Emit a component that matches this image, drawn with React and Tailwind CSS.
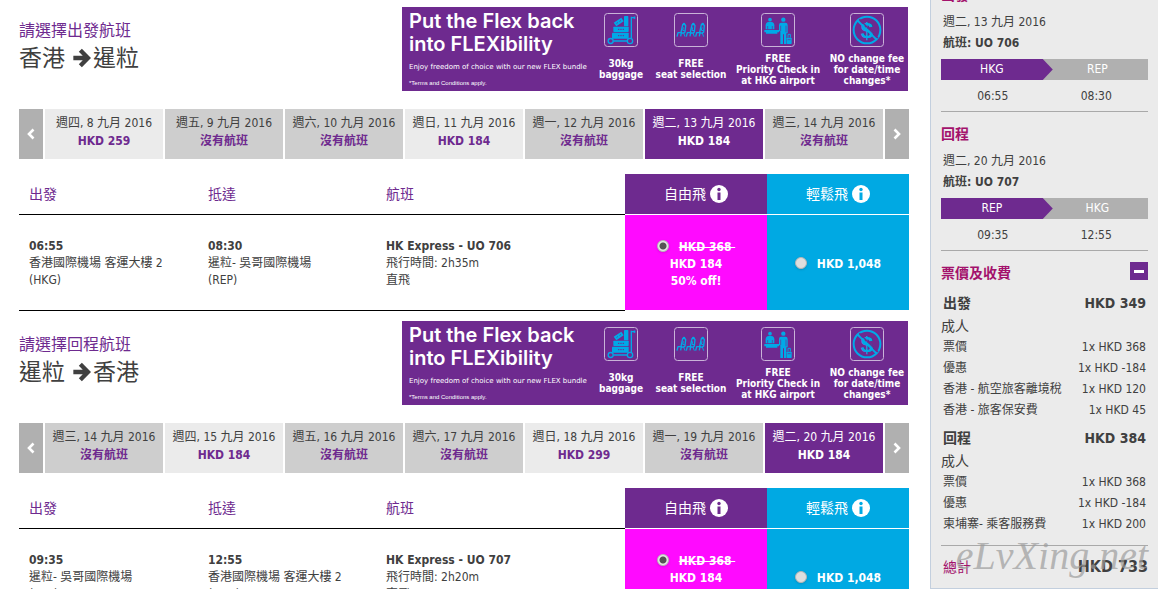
import { useState } from "react";

const NONE = "沒有航班";

const journeys = [
  {
    id: "out",
    title: "請選擇出發航班",
    from: "香港",
    to: "暹粒",
    selected: 5,
    dates: [
      ["週四, 8 九月 2016", "HKD 259"],
      ["週五, 9 九月 2016", NONE],
      ["週六, 10 九月 2016", NONE],
      ["週日, 11 九月 2016", "HKD 184"],
      ["週一, 12 九月 2016", NONE],
      ["週二, 13 九月 2016", "HKD 184"],
      ["週三, 14 九月 2016", NONE],
    ],
    depart: ["06:55", "香港國際機場 客運大樓 2", "(HKG)"],
    arrive: ["08:30", "暹粒- 吳哥國際機場", "(REP)"],
    flight: ["HK Express - UO 706", "飛行時間: 2h35m", "直飛"],
  },
  {
    id: "back",
    title: "請選擇回程航班",
    from: "暹粒",
    to: "香港",
    selected: 6,
    dates: [
      ["週三, 14 九月 2016", NONE],
      ["週四, 15 九月 2016", "HKD 184"],
      ["週五, 16 九月 2016", NONE],
      ["週六, 17 九月 2016", NONE],
      ["週日, 18 九月 2016", "HKD 299"],
      ["週一, 19 九月 2016", NONE],
      ["週二, 20 九月 2016", "HKD 184"],
    ],
    depart: ["09:35", "暹粒- 吳哥國際機場", "(REP)"],
    arrive: ["12:55", "香港國際機場 客運大樓 2", "(HKG)"],
    flight: ["HK Express - UO 707", "飛行時間: 2h20m", "直飛"],
  },
];

const legs = [
  { title: "出發", date: "週二, 13 九月 2016", flight: "UO 706", from: "HKG", to: "REP", dep: "06:55", arr: "08:30" },
  { title: "回程", date: "週二, 20 九月 2016", flight: "UO 707", from: "REP", to: "HKG", dep: "09:35", arr: "12:55" },
];

const fares = [
  {
    title: "出發",
    total: "HKD 349",
    rows: [
      ["票價", "1x HKD 368"],
      ["優惠", "1x HKD -184"],
      ["香港 - 航空旅客離境稅", "1x HKD 120"],
      ["香港 - 旅客保安費", "1x HKD 45"],
    ],
  },
  {
    title: "回程",
    total: "HKD 384",
    rows: [
      ["票價", "1x HKD 368"],
      ["優惠", "1x HKD -184"],
      ["柬埔寨- 乘客服務費", "1x HKD 200"],
    ],
  },
];

function ArrowIcon() {
  return (
    <svg viewBox="0 0 57 60" className="mr-[2px] ml-[7px] h-[20px] w-[19px]" aria-hidden="true">
      <path d="M4 30H44M25 7 48 30 25 53" fill="none" stroke="currentColor" strokeWidth="13" />
    </svg>
  );
}

function Chevron({ d }) {
  return (
    <svg viewBox="0 0 8 12" className="h-[12px] w-[8px]" aria-hidden="true">
      <path d={d} fill="none" stroke="currentColor" strokeWidth="2.600" />
    </svg>
  );
}

function InfoIcon({ mark }) {
  return (
    <svg viewBox="0 0 18 18" className="size-[18px]" aria-hidden="true">
      <circle cx="9" cy="9" r="9" fill="#fff" />
      <g className={mark}>
        <circle cx="9" cy="4.500" r="1.700" />
        <rect x="7.500" y="7.500" width="3" height="7.500" />
      </g>
    </svg>
  );
}

function IconFrame({ children }) {
  return (
    <svg viewBox="0 0 102 102" className="size-[34px]" aria-hidden="true">
      <rect x="1.5" y="1.5" width="99" height="99" rx="9" fill="none" stroke="#c9b3d8" strokeWidth="3" />
      {children}
    </svg>
  );
}

function BaggageIcon() {
  return (
    <IconFrame>
      <g fill="none" stroke="#00a9e7" strokeWidth="4">
        <path d="M82 11V76M80 14H93M28 84H70" />
        <circle cx="20" cy="84" r="7.500" />
        <circle cx="78" cy="84" r="8" />
      </g>
      <path d="M89 14H94" stroke="#00a9e7" strokeWidth="7" />
      <g fill="#00a9e7">
        <rect x="24" y="59" width="50" height="18" rx="2" />
        <rect x="28" y="41" width="46" height="16" rx="2" />
        <rect x="60" y="9" width="13" height="31" rx="2" />
        <path d="M29 29 52 14 59 25 37 40Z" />
      </g>
      <path d="M42 49H46M49 49H53M56 49H60M42 68H46M49 68H53M56 68H60M38 31 41 29M47 25 50 23" stroke="#6e2a8f" strokeWidth="3" />
    </IconFrame>
  );
}

function SeatPerson({ x }) {
  return (
    <g transform={`translate(${x} 0)`} fill="none" stroke="#00a9e7" strokeLinejoin="round">
      <path d="M1 71 4 59H14L12 70" strokeWidth="4" />
      <path d="M18 35Q24 32 27 38L25 57Q20 63 13 58Z" strokeWidth="4" />
      <path d="M20 43 18 52 24 53M21 60 25 71" strokeWidth="3" />
      <ellipse cx="22" cy="33" rx="4" ry="4" fill="#00a9e7" stroke="none" />
    </g>
  );
}

function SeatIcon() {
  return (
    <IconFrame>
      <SeatPerson x={8} />
      <SeatPerson x={36} />
      <SeatPerson x={64} />
    </IconFrame>
  );
}

function CheckInIcon() {
  return (
    <IconFrame>
      <g fill="#00a9e7">
        <circle cx="27" cy="20" r="5.500" />
        <path d="M14 49V37Q14 28 23 27H31Q40 28 40 37V49Z" />
        <path d="M10 51H54V58H49V62H15V58H10Z" />
        <circle cx="67" cy="20" r="6.500" />
        <path d="M61 29H73Q80 29 80 36V61H76V93H69V64H66V93H58V55H54V36Q54 29 61 29Z" />
        <rect x="77" y="74" width="15" height="19" rx="2" />
      </g>
      <path d="M81 74V64H88V74" fill="none" stroke="#00a9e7" strokeWidth="3" />
      <path d="M20 39V49M34 39V49M59 38V54M75 38V58M80 80H89" stroke="#6e2a8f" strokeWidth="2" />
    </IconFrame>
  );
}

function NoFeeIcon() {
  return (
    <IconFrame>
      <circle cx="51" cy="51" r="40" fill="none" stroke="#00a9e7" strokeWidth="6" />
      <text x="51" y="75" textAnchor="middle" className="font-['Liberation_Sans',sans-serif] text-[68px] font-bold" fill="#00a9e7">
        $
      </text>
      <path d="M28 19 84 75" stroke="#6e2a8f" strokeWidth="4" />
      <path d="M23 23 79 79" stroke="#00a9e7" strokeWidth="6" />
    </IconFrame>
  );
}

const perks = [
  { icon: BaggageIcon, lines: ["30kg", "baggage"], width: "w-[68px]" },
  { icon: SeatIcon, lines: ["FREE", "seat selection"], width: "w-[72px]" },
  { icon: CheckInIcon, lines: ["FREE", "Priority Check in", "at HKG airport"], width: "w-[102px]" },
  { icon: NoFeeIcon, lines: ["NO change fee", "for date/time", "changes*"], width: "w-[76px]" },
];

function Banner() {
  return (
    <aside className="mr-px flex h-[84px] w-[506px] shrink-0 bg-[#6e2a8f] text-white">
      <div className="w-[185px] shrink-0 pt-[3px] pl-[7px] font-['DejaVu_Sans',sans-serif] whitespace-nowrap">
        <p className="font-['Inter',sans-serif] text-[20px] leading-[23px] font-semibold">Put the Flex back</p>
        <p className="font-['Inter',sans-serif] text-[20px] leading-[23px] font-semibold">into FLEXibility</p>
        <p className="mt-[5px] text-[7px] leading-[13px]">Enjoy freedom of choice with our new FLEX bundle</p>
        <p className="mt-[3px] font-['Liberation_Sans',sans-serif] text-[6px] leading-[12px]">*Terms and Conditions apply.</p>
      </div>
      <ul className="flex">
        {perks.map(({ icon: Icon, lines, width }) => (
          <li key={lines.join()} className={`flex shrink-0 flex-col items-center pt-[6px] ${width}`}>
            <Icon />
            <p className="flex h-[38px] flex-col justify-center pt-[6px] text-center font-['DejaVu_Sans_Condensed','Noto_Sans',sans-serif] text-[10px] leading-[11px] font-bold whitespace-nowrap">
              {lines.map((l) => (
                <span key={l}>{l}</span>
              ))}
            </p>
          </li>
        ))}
      </ul>
    </aside>
  );
}

function DateStrip({ journey }) {
  const [selected, setSelected] = useState(journey.selected);
  const arrow = "flex w-[24px] shrink-0 items-center justify-center bg-[#b0b0b0] text-white";
  return (
    <nav className="mt-[18px] flex h-[50px] gap-[2px]">
      <button type="button" aria-label="上一週" className={arrow}>
        <Chevron d="M6.500 1.500 2 6 6.500 10.500" />
      </button>
      {journey.dates.map(([date, price], i) => {
        const active = i === selected;
        const tone = active ? "bg-[#6e2a8f] text-white" : price === NONE ? "bg-[#cecece]" : "bg-[#ebebeb]";
        return (
          <button
            key={date}
            type="button"
            aria-pressed={active}
            onClick={() => setSelected(i)}
            className={`flex min-w-0 flex-1 flex-col items-center pt-[5px] leading-[18px] whitespace-nowrap ${tone}`}
          >
            <span>{date}</span>
            <span className={active ? "font-bold" : "font-bold text-[#6e2a8f]"}>{price}</span>
          </button>
        );
      })}
      <button type="button" aria-label="下一週" className={arrow}>
        <Chevron d="M1.500 1.500 6 6 1.500 10.500" />
      </button>
    </nav>
  );
}

const radio =
  "mb-[4px] size-[12px] shrink-0 appearance-none rounded-full border border-[#b5b5b5] bg-[#dedede] shadow-sm checked:bg-[radial-gradient(circle,#555_0_3px,#e8e8e8_4px)]";

function DetailCell({ lines }) {
  return (
    <td className="h-[96px] border-b border-black pt-[2px] pl-[10px] align-middle leading-[17px]">
      <strong className="block">{lines[0]}</strong>
      <span className="block">{lines[1]}</span>
      <span className="block">{lines[2]}</span>
    </td>
  );
}

function FlightTable({ journey }) {
  const head = "h-[41px] border-b border-black pl-[10px] text-left align-middle text-[14px] font-normal text-[#6e2a8f]";
  const fareHead = "border-b border-white align-middle text-[14px] font-normal text-white";
  return (
    <table className="mt-[15px] w-full table-fixed border-separate border-spacing-0">
      <colgroup>
        <col className="w-[179px]" />
        <col className="w-[178px]" />
        <col />
        <col className="w-[142px]" />
        <col className="w-[142px]" />
      </colgroup>
      <thead>
        <tr>
          <th className={head}>出發</th>
          <th className={head}>抵達</th>
          <th className={head}>航班</th>
          <th className={`bg-[#6e2a8f] ${fareHead}`}>
            <span className="flex items-center justify-center gap-[4px]">
              自由飛
              <InfoIcon mark="fill-[#6e2a8f]" />
            </span>
          </th>
          <th className={`bg-[#00a9e3] ${fareHead}`}>
            <span className="flex items-center justify-center gap-[4px]">
              輕鬆飛
              <InfoIcon mark="fill-[#00a9e3]" />
            </span>
          </th>
        </tr>
      </thead>
      <tbody>
        <tr>
          <DetailCell lines={journey.depart} />
          <DetailCell lines={journey.arrive} />
          <DetailCell lines={journey.flight} />
          <td className="border-b border-white bg-[#ff0aff] pt-[4px] align-middle font-bold text-white">
            <label className="flex flex-col items-center leading-[17px]">
              <span className="flex items-center gap-[10px]">
                <input type="radio" name={`fare-${journey.id}`} defaultChecked className={radio} />
                <s className="whitespace-pre">HKD 368 </s>
              </span>
              <span>HKD 184</span>
              <span>50% off!</span>
            </label>
          </td>
          <td className="border-b border-white bg-[#00a9e3] pt-[4px] align-middle font-bold text-white">
            <label className="flex items-center justify-center gap-[10px] leading-[17px]">
              <input type="radio" name={`fare-${journey.id}`} className={radio} />
              HKD 1,048
            </label>
          </td>
        </tr>
      </tbody>
    </table>
  );
}

function Journey({ journey }) {
  return (
    <section className="mb-[10px]">
      <header className="flex justify-between">
        <div className="pt-[14px]">
          <h2 className="text-[16px] leading-[20px] text-[#6e2a8f]">{journey.title}</h2>
          <p className="flex items-center text-[23px] leading-[34px]">
            {journey.from}
            <ArrowIcon />
            {journey.to}
          </p>
        </div>
        <Banner />
      </header>
      <DateStrip journey={journey} />
      <FlightTable journey={journey} />
    </section>
  );
}

function Leg({ leg }) {
  return (
    <section className="border-b border-[#a9a9a9] pt-[12px] pb-[5px]">
      <h3 className="text-[14px] leading-[20px] font-bold text-[#a3126c]">{leg.title}</h3>
      <p className="mt-[7px] pl-[2px] leading-[20px]">{leg.date}</p>
      <p className="mt-px pl-[2px] leading-[20px] font-bold">航班: {leg.flight}</p>
      <div className="mt-[6px] flex h-[21px] bg-[#b0b0b0] text-center leading-[21px] text-white">
        <span className="w-[54%] bg-[#6e2a8f] pr-[10px] [clip-path:polygon(0_0,calc(100%_-_10px)_0,100%_50%,calc(100%_-_10px)_100%,0_100%)]">
          {leg.from}
        </span>
        <span className="flex-1 pr-[6px]">{leg.to}</span>
      </div>
      <div className="mt-[6px] flex text-center leading-[20px]">
        <span className="flex-1">{leg.dep}</span>
        <span className="flex-1">{leg.arr}</span>
      </div>
    </section>
  );
}

function Fare({ fare }) {
  return (
    <section className="mb-[5px]">
      <h4 className="flex justify-between px-[2px] text-[14px] leading-[24px] font-bold">
        <span>{fare.title}</span>
        <span>{fare.total}</span>
      </h4>
      <p className="text-[14px] leading-[22px]">成人</p>
      <dl>
        {fare.rows.map(([name, value]) => (
          <div key={name} className="flex justify-between px-[2px] leading-[21px] whitespace-nowrap">
            <dt>{name}</dt>
            <dd>{value}</dd>
          </div>
        ))}
      </dl>
    </section>
  );
}

function Summary() {
  const [open, setOpen] = useState(true);
  return (
    <aside className="relative -mt-[27px] w-[228px] shrink-0 self-start border-b border-l border-[#c3cfde] bg-[#ebebeb] px-[10px]">
      {legs.map((leg) => (
        <Leg key={leg.flight} leg={leg} />
      ))}
      <div className="flex h-[40px] items-center justify-between">
        <h3 className="pt-[4px] text-[14px] font-bold text-[#a3126c]">票價及收費</h3>
        <button
          type="button"
          aria-label="收合"
          aria-expanded={open}
          onClick={() => setOpen(!open)}
          className="flex size-[18px] items-center justify-center bg-[#6e2a8f]"
        >
          <span className="h-[3px] w-[10px] bg-white" />
        </button>
      </div>
      {open && fares.map((fare) => <Fare key={fare.title} fare={fare} />)}
      <p className="mt-[10px] flex h-[43px] items-center justify-between border-t border-[#a9a9a9] text-[16px]">
        <span className="pl-[2px] text-[14px] text-[#a3126c]">總計</span>
        <span className="font-bold">HKD 733</span>
      </p>
      <span className="pointer-events-none absolute right-[10px] bottom-[10px] font-['Liberation_Serif',serif] text-[40px] leading-[44px] text-[#9c9c9c]/70 italic">
        eLvXing.net
      </span>
    </aside>
  );
}

export default function App() {
  return (
    <div className="flex gap-[21px] overflow-hidden bg-white pl-[19px] font-['DejaVu_Sans_Condensed','Noto_Sans','Noto_Sans_CJK_TC',sans-serif] text-[12px] text-[#404040]">
      <main className="min-w-0 flex-1 pt-[7px]">
        {journeys.map((j) => (
          <Journey key={j.id} journey={j} />
        ))}
      </main>
      <Summary />
    </div>
  );
}
